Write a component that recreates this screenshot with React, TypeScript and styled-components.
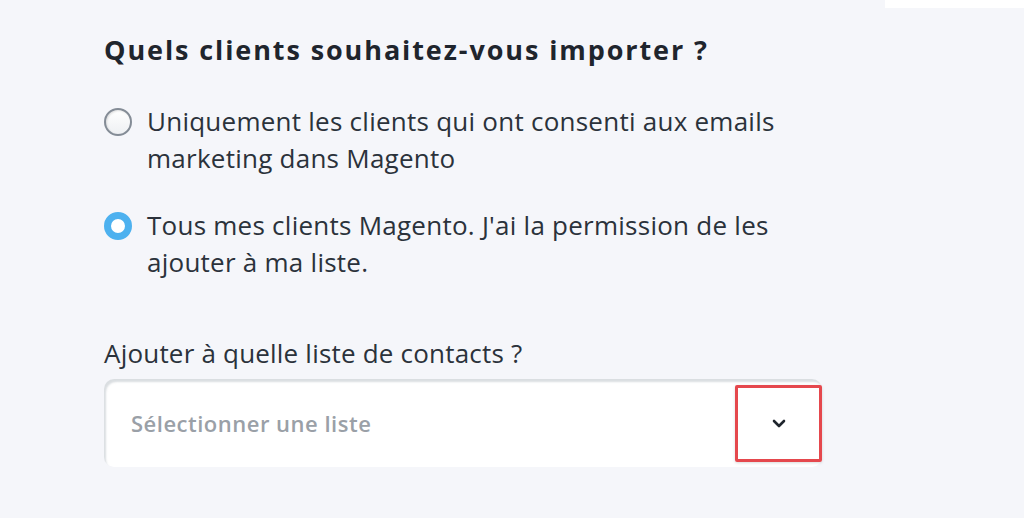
import styled, { createGlobalStyle } from "styled-components";

const GlobalStyle = createGlobalStyle`
  html, body {
    margin: 0;
    padding: 0;
    background: #f5f6fa;
  }
  body {
    font-family: "Open Sans", "Noto Sans", sans-serif;
    color: #252b33;
  }
`;

const Page = styled.div`
  width: 1024px;
  height: 518px;
  position: relative;
  overflow: hidden;
  background: #f5f6fa;
`;

const Corner = styled.div`
  position: absolute;
  top: 0;
  right: 0;
  width: 139px;
  height: 8px;
  background: #ffffff;
`;

const Form = styled.div`
  padding: 32px 0 0 104px;
  width: 718px;
  display: flex;
  flex-direction: column;
`;

const Title = styled.h2`
  margin: 0;
  font-size: 27px;
  font-weight: 700;
  letter-spacing: 1.9px;
  line-height: 36px;
  color: #1f252d;
  white-space: nowrap;
`;

const Options = styled.div`
  display: flex;
  flex-direction: column;
  gap: 30px;
  margin-top: 35px;
`;

const Option = styled.label`
  display: flex;
  align-items: flex-start;
  gap: 15px;
  font-size: 26px;
  line-height: 37px;
  letter-spacing: 0.25px;
  color: #2b323b;
  white-space: nowrap;
`;

const Radio = styled.span<{ $checked?: boolean }>`
  flex: none;
  width: 28px;
  height: 28px;
  margin-top: 5px;
  border-radius: 50%;
  box-sizing: border-box;
  ${(p) =>
    p.$checked
      ? `
    background: #ffffff;
    border: 7px solid #4db1ef;
  `
      : `
    background: linear-gradient(to bottom, #ffffff, #eef0f3);
    border: 2px solid #848c96;
    box-shadow: inset 1px 1px 2px rgba(0, 0, 0, 0.12);
  `}
`;

const FieldLabel = styled.div`
  margin-top: 56px;
  font-size: 26px;
  line-height: 32px;
  letter-spacing: 0.2px;
  color: #2b323b;
`;

const Select = styled.div`
  margin-top: 10px;
  height: 88px;
  background: #ffffff;
  border-radius: 10px;
  box-shadow: inset 2px 3px 2px rgba(150, 160, 170, 0.35);
  display: flex;
  align-items: center;
  justify-content: space-between;
  padding-left: 27px;
`;

const Placeholder = styled.span`
  font-size: 22px;
  font-weight: 600;
  color: #9aa0a7;
  letter-spacing: 0.5px;
`;

const ChevronBox = styled.div`
  width: 87px;
  height: 77px;
  box-sizing: border-box;
  border: 3px solid #e5484d;
  border-radius: 2px;
  display: flex;
  align-items: center;
  justify-content: center;
  box-shadow: 0 1px 3px rgba(0, 0, 0, 0.15);
`;

export default function App() {
  return (
    <Page>
      <GlobalStyle />
      <Corner />
      <Form>
        <Title>Quels clients souhaitez-vous importer ?</Title>
        <Options>
          <Option>
            <Radio />
            <span>
              Uniquement les clients qui ont consenti aux emails
              <br />
              marketing dans Magento
            </span>
          </Option>
          <Option>
            <Radio $checked />
            <span>
              Tous mes clients Magento. J'ai la permission de les
              <br />
              ajouter à ma liste.
            </span>
          </Option>
        </Options>
        <FieldLabel>Ajouter à quelle liste de contacts ?</FieldLabel>
        <Select>
          <Placeholder>Sélectionner une liste</Placeholder>
          <ChevronBox>
            <svg width="14" height="9" viewBox="0 0 14 9">
              <path d="M2 2l5 5 5-5" fill="none" stroke="#1f252d" strokeWidth="2.6" strokeLinecap="round" strokeLinejoin="round" />
            </svg>
          </ChevronBox>
        </Select>
      </Form>
    </Page>
  );
}
